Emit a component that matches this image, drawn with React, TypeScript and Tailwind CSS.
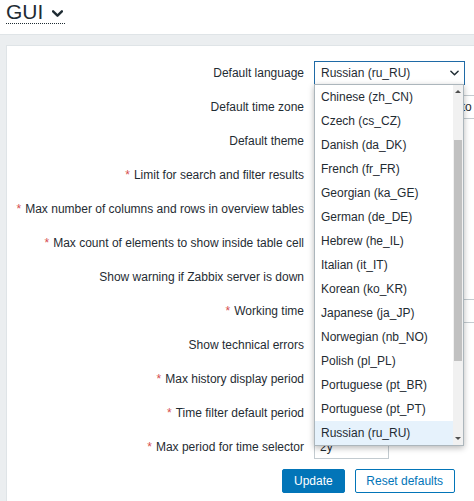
import React from "react";

const Req = () => <span className="text-[#d64e4e] mr-[4px]">*</span>;

const Chevron = ({ className }: { className?: string }) => (
  <svg className={className} viewBox="0 0 10 6" fill="none">
    <path d="M1 1 L5 5 L9 1" stroke="currentColor" strokeWidth="1.6" strokeLinecap="round" strokeLinejoin="round" />
  </svg>
);

const Input = ({ w, value }: { w: string; value: string }) => (
  <div className={`${w} h-[24px] border border-[#c3cbd0] bg-white px-[5px] flex items-center`}>{value}</div>
);

const Check = () => <div className="w-[14px] h-[14px] border border-[#c3cbd0] bg-white" />;

const languages = [
  "Chinese (zh_CN)",
  "Czech (cs_CZ)",
  "Danish (da_DK)",
  "French (fr_FR)",
  "Georgian (ka_GE)",
  "German (de_DE)",
  "Hebrew (he_IL)",
  "Italian (it_IT)",
  "Korean (ko_KR)",
  "Japanese (ja_JP)",
  "Norwegian (nb_NO)",
  "Polish (pl_PL)",
  "Portuguese (pt_BR)",
  "Portuguese (pt_PT)",
  "Russian (ru_RU)",
];

export default function App() {
  return (
    <div className="w-[474px] h-[501px] overflow-hidden bg-white font-['Liberation_Sans',Arial,sans-serif] text-[12px] text-[#1f2c33]">
      <div className="h-[34px] pl-[6px] pt-[1px]">
        <div className="inline-flex items-center h-[23px] border-b border-dotted border-[#1f2c33] pr-[2px]">
          <span className="text-[21px] leading-[22px]">GUI</span>
          <Chevron className="ml-[9px] mt-[2px] w-[11px] h-[7px] text-[#1f2c33] [&_path]:[stroke-width:2.2]" />
        </div>
      </div>
      <div className="bg-[#ebeef0] border-t border-[#dfe4e7] pt-[10px] pl-[6px] h-[467px]">
        <div className="relative bg-white border-l border-t border-[#dfe4e7] h-full pt-[15px] overflow-hidden">
          <div className="grid grid-cols-[297px_1fr] gap-x-[10px] gap-y-[10px]">
            <div className="h-[24px] flex items-center justify-end">Default language</div>
            <div className="w-[151px] h-[24px] border border-[#1f6aa6] flex items-center justify-between pl-[6px] pr-[5px]">
              <span>Russian (ru_RU)</span>
              <Chevron className="w-[9px] h-[6px] text-[#1f2c33]" />
            </div>

            <div className="h-[24px] flex items-center justify-end">Default time zone</div>
            <div className="w-[240px] h-[24px] border border-[#c3cbd0] flex items-center pl-0 whitespace-nowrap overflow-hidden">
              (UTC-05:00) America/Toronto
            </div>

            <div className="h-[24px] flex items-center justify-end">Default theme</div>
            <div className="w-[110px] h-[24px] border border-[#c3cbd0] flex items-center pl-[6px]">Blue</div>

            <div className="h-[24px] flex items-center justify-end"><Req />Limit for search and filter results</div>
            <Input w="w-[75px]" value="1000" />

            <div className="h-[24px] flex items-center justify-end"><Req />Max number of columns and rows in overview tables</div>
            <Input w="w-[75px]" value="50" />

            <div className="h-[24px] flex items-center justify-end"><Req />Max count of elements to show inside table cell</div>
            <Input w="w-[75px]" value="50" />

            <div className="h-[24px] flex items-center justify-end">Show warning if Zabbix server is down</div>
            <div className="h-[24px] flex items-center"><Check /></div>

            <div className="h-[24px] flex items-center justify-end"><Req />Working time</div>
            <Input w="w-[200px]" value="1-5,09:00-18:00" />

            <div className="h-[24px] flex items-center justify-end">Show technical errors</div>
            <div className="h-[24px] flex items-center"><Check /></div>

            <div className="h-[24px] flex items-center justify-end"><Req />Max history display period</div>
            <Input w="w-[75px]" value="24h" />

            <div className="h-[24px] flex items-center justify-end"><Req />Time filter default period</div>
            <Input w="w-[75px]" value="1h" />

            <div className="h-[24px] flex items-center justify-end"><Req />Max period for time selector</div>
            <Input w="w-[75px]" value="2y" />
          </div>

          <div className="flex gap-[10px] pl-[275px] mt-[10px]">
            <button className="h-[24px] px-[11px] bg-[#0275b8] text-white rounded-[2px] border border-[#0275b8]">Update</button>
            <button className="h-[24px] w-[100px] bg-white text-[#0275b8] rounded-[2px] border border-[#0275b8]">Reset defaults</button>
          </div>

          <div className="absolute left-[307px] top-[38px] w-[150px] h-[362px] border border-[#acb6bc] bg-white shadow-[0_2px_6px_rgba(0,0,0,0.28)] flex overflow-hidden">
            <div className="flex-1">
              {languages.map((l, i) => (
                <div
                  key={l}
                  className={`h-[24px] leading-[24px] pl-[6px] whitespace-nowrap ${i === languages.length - 1 ? "bg-[#e6f2fc]" : ""}`}
                >
                  {l}
                </div>
              ))}
            </div>
            <div className="relative w-[10px] bg-[#f1f1f1]">
              <div className="absolute left-[2px] top-[5px] w-0 h-0 border-l-[3px] border-r-[3px] border-b-[3px] border-l-transparent border-r-transparent border-b-[#505050]" />
              <div className="absolute left-[1px] top-[55px] w-[8px] h-[221px] bg-[#c1c1c1]" />
              <div className="absolute left-[2px] bottom-[5px] w-0 h-0 border-l-[3px] border-r-[3px] border-t-[3px] border-l-transparent border-r-transparent border-t-[#505050]" />
            </div>
          </div>
        </div>
      </div>
    </div>
  );
}
